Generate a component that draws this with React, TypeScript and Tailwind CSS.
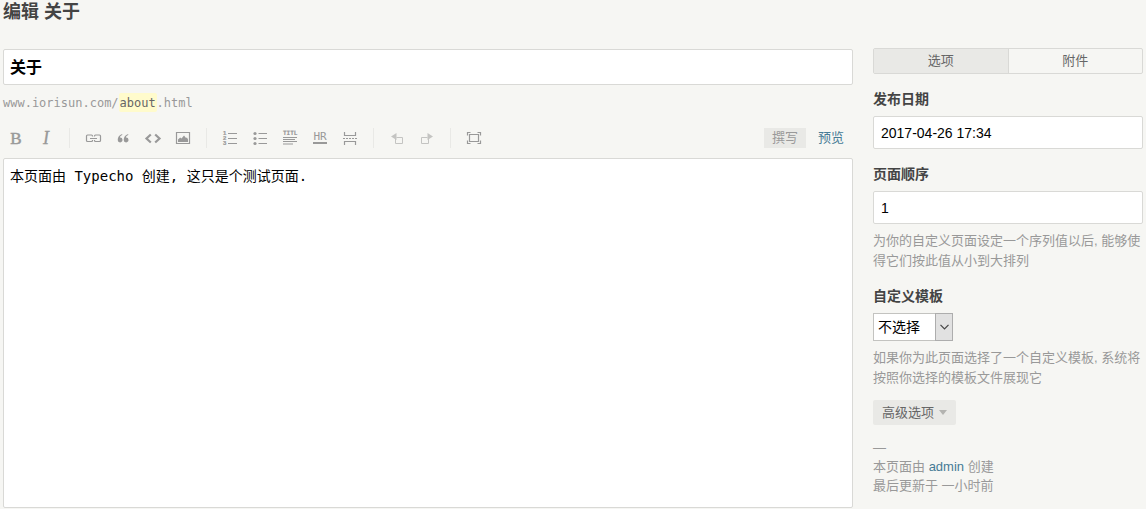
import type { ReactNode } from 'react';

const sans = 'font-["Liberation_Sans","Noto_Sans_CJK_SC",sans-serif]';
const mono = 'font-["DejaVu_Sans_Mono","Noto_Sans_CJK_SC",monospace]';

function ToolButton({ label, faded = false, children }: { label: string; faded?: boolean; children: ReactNode }) {
  return (
    <button
      type="button"
      aria-label={label}
      className={`flex h-[30px] w-[30px] items-center justify-center ${faded ? 'text-[#c4c4c2]' : 'text-[#999]'}`}
    >
      <svg width="20" height="20" viewBox="0 0 20 20" fill="none" stroke="currentColor" strokeWidth="1" aria-hidden="true">
        {children}
      </svg>
    </button>
  );
}

function Divider() {
  return (
    <span className="flex w-[17px] justify-center">
      <span className="h-5 w-px bg-[#e9e9e6]" />
    </span>
  );
}

function Toolbar() {
  return (
    <div className="-ml-0.5 flex items-center" role="toolbar" aria-label="格式">
      <ToolButton label="加粗">
        <text x="10" y="16" textAnchor="middle" fill="currentColor" strokeWidth="0.5" className='font-["Liberation_Serif",serif] text-[17px]'>B</text>
      </ToolButton>
      <ToolButton label="斜体">
        <text x="10" y="16" textAnchor="middle" fill="currentColor" strokeWidth="0.3" className='font-["Liberation_Serif",serif] text-[18px] italic'>I</text>
      </ToolButton>
      <Divider />
      <ToolButton label="链接">
        <path d="M9.500 8.500V8a1 1 0 0 0-1-1h-4a1 1 0 0 0-1 1v4.500a1 1 0 0 0 1 1h4a1 1 0 0 0 1-1V12M11.500 8.500V8a1 1 0 0 1 1-1h4a1 1 0 0 1 1 1v4.500a1 1 0 0 1-1 1h-4a1 1 0 0 1-1-1V12M7 10.500h7" strokeWidth="1.200" />
      </ToolButton>
      <ToolButton label="引用">
        <path d="M9.200 6C6.200 7 4.700 9.200 4.700 12a2.400 2.400 0 1 0 2.200-2.400C7 8.500 7.900 7.600 9.200 7zM15.200 6c-3 1-4.500 3.200-4.500 6a2.400 2.400 0 1 0 2.200-2.400c.1-1.100 1-2 2.300-2.600z" fill="currentColor" stroke="none" />
      </ToolButton>
      <ToolButton label="代码">
        <path d="M7.800 6.500 3.500 10.500l4.300 4M12.200 6.500l4.300 4-4.300 4" strokeWidth="2.200" />
      </ToolButton>
      <ToolButton label="图片">
        <path d="M3.500 4.500h13v11h-13z" strokeWidth="1.200" />
        <path d="M5 14v-2.500l2.200-2 1.300 1L11 7.500l2 2.500 1-.5 1 2V14z" fill="currentColor" stroke="none" />
      </ToolButton>
      <Divider />
      <ToolButton label="数字列表">
        <path d="M8 5.500h9M8 10.500h9M8 15.500h9" strokeWidth="1.200" />
        <g fill="currentColor" strokeWidth="0.2" className='font-["Liberation_Sans",sans-serif] text-[6px] font-bold'>
          <text x="3" y="7">1</text>
          <text x="3" y="12">2</text>
          <text x="3" y="17">3</text>
        </g>
      </ToolButton>
      <ToolButton label="普通列表">
        <path d="M8.500 5.500H17M8.500 10.500H17M8.500 15.500H17" strokeWidth="1.200" />
        <g fill="currentColor" stroke="none">
          <circle cx="5" cy="5.500" r="1.600" />
          <circle cx="5" cy="10.500" r="1.600" />
          <circle cx="5" cy="15.500" r="1.600" />
        </g>
      </ToolButton>
      <ToolButton label="标题">
        <text x="3" y="7" fill="currentColor" strokeWidth="0.2" className='font-["DejaVu_Sans_Mono",monospace] text-[6px] font-bold'>TITL</text>
        <path d="M3 9.500h14M3 11.500h12M3 13.500h14M3 16h10" />
      </ToolButton>
      <ToolButton label="分割线">
        <text x="10" y="12" textAnchor="middle" fill="currentColor" stroke="none" className='font-["DejaVu_Sans_Mono",monospace] text-[11px]'>HR</text>
        <path d="M3 15h14" strokeWidth="2" />
      </ToolButton>
      <ToolButton label="摘要分割线">
        <path d="M4.500 4v3.500h11V4M4.500 17v-3.500h11V17" strokeWidth="1.200" />
        <path d="M3 10.500h14" strokeDasharray="2 1" />
      </ToolButton>
      <Divider />
      <ToolButton label="撤销" faded>
        <path d="M9.500 9.500h6v6h-7v-5" />
        <path d="M4 8.500 9.500 5v7z" fill="currentColor" stroke="none" />
      </ToolButton>
      <ToolButton label="重做" faded>
        <path d="M10.500 9.500h-6v6h7v-5" />
        <path d="M16 8.500 10.500 5v7z" fill="currentColor" stroke="none" />
      </ToolButton>
      <Divider />
      <ToolButton label="全屏">
        <path d="M5.500 6.500h9v7h-9z" strokeWidth="1.200" />
        <path d="M3.500 7.500v-3h3M13.500 4.500h3v3M16.500 12.500v3h-3M6.500 15.500h-3v-3" strokeWidth="1.200" />
      </ToolButton>
    </div>
  );
}

const labelClass = 'mb-[7px] block text-sm leading-5 font-bold text-[#444]';
const inputClass = 'block h-[33px] w-full rounded-xs border border-[#d9d9d6] bg-white px-[7px] text-sm text-black outline-none';
const helpClass = 'mt-[7px] text-[13px] leading-5 text-[#999]';

export default function App() {
  return (
    <main className={`min-h-screen bg-[#f6f6f3] px-[3px] text-[13px] text-[#444] ${sans}`}>
      <h2 className="mb-6 text-lg leading-6 font-bold">编辑 关于</h2>
      <form className="grid grid-cols-[minmax(0,1fr)_270px] items-start gap-5" onSubmit={(e) => e.preventDefault()}>
        <section className="pt-px">
          <input
            aria-label="标题"
            defaultValue="关于"
            className="block h-9 w-full rounded-xs border border-[#d9d9d6] bg-white px-1.5 pb-0.5 text-base font-bold text-black outline-none"
          />
          <p className={`mt-2 flex h-[19px] items-center text-xs text-[#999] ${mono}`}>
            www.iorisun.com/
            <input
              aria-label="自定义链接"
              defaultValue="about"
              className="h-[19px] w-[38px] rounded-xs bg-[#fffbcc] px-px text-[#666] outline-none"
            />
            .html
          </p>
          <div className="mt-[11px] mb-[5px] flex items-center justify-between">
            <Toolbar />
            <div className="mr-px flex gap-1">
              <button type="button" className="h-5 bg-[#e9e9e6] px-2 leading-5 text-[#999]">撰写</button>
              <button type="button" className="h-5 px-2 leading-5 text-[#467b96]">预览</button>
            </div>
          </div>
          <textarea
            aria-label="页面内容"
            defaultValue="本页面由 Typecho 创建, 这只是个测试页面."
            className={`block h-[350px] w-full resize-none rounded-xs border border-[#d9d9d6] bg-white px-1.5 py-[7px] text-sm leading-[21px] text-black outline-none ${mono}`}
          />
        </section>

        <aside>
          <div className="mb-[15px] flex h-[26px] rounded-xs border border-[#d9d9d6] text-[#666]">
            <button type="button" className="flex-1 border-r border-[#d9d9d6] bg-[#e9e9e6]">选项</button>
            <button type="button" className="flex-1">附件</button>
          </div>

          <div className="mb-[15px]">
            <label htmlFor="date" className={labelClass}>发布日期</label>
            <input id="date" defaultValue="2017-04-26 17:34" className={inputClass} />
          </div>

          <div className="mb-[15px]">
            <label htmlFor="order" className={labelClass}>页面顺序</label>
            <input id="order" defaultValue="1" className={inputClass} />
            <p className={helpClass}>为你的自定义页面设定一个序列值以后, 能够使得它们按此值从小到大排列</p>
          </div>

          <div>
            <label htmlFor="template" className={labelClass}>自定义模板</label>
            <div className="relative h-7 w-20">
              <select id="template" className="h-full w-full appearance-none border border-[#c3c3c0] bg-white pl-1 text-sm text-black outline-none">
                <option>不选择</option>
              </select>
              <span className="pointer-events-none absolute inset-y-0 right-0 flex w-[18px] items-center justify-center border border-[#adadad] bg-[#e1e1e1]">
                <svg width="9" height="6" viewBox="0 0 9 6" fill="none" stroke="#444" strokeWidth="1.200" aria-hidden="true">
                  <path d="m.5.8 4 4 4-4" />
                </svg>
              </span>
            </div>
            <p className={helpClass}>如果你为此页面选择了一个自定义模板, 系统将按照你选择的模板文件展现它</p>
          </div>

          <button type="button" className="mt-3 flex h-[25px] items-center gap-[5px] rounded-xs bg-[#e9e9e6] px-[9px] text-[#666]">
            高级选项
            <svg width="8" height="5" viewBox="0 0 8 5" fill="#b3b3b0" aria-hidden="true">
              <path d="M0 0h8L4 5z" />
            </svg>
          </button>

          <div className="mt-[13px] leading-[19px] text-[#999]">
            <p>—</p>
            <p>本页面由 <a href="#admin" className="text-[#467b96]">admin</a> 创建</p>
            <p>最后更新于 一小时前</p>
          </div>
        </aside>
      </form>
    </main>
  );
}
